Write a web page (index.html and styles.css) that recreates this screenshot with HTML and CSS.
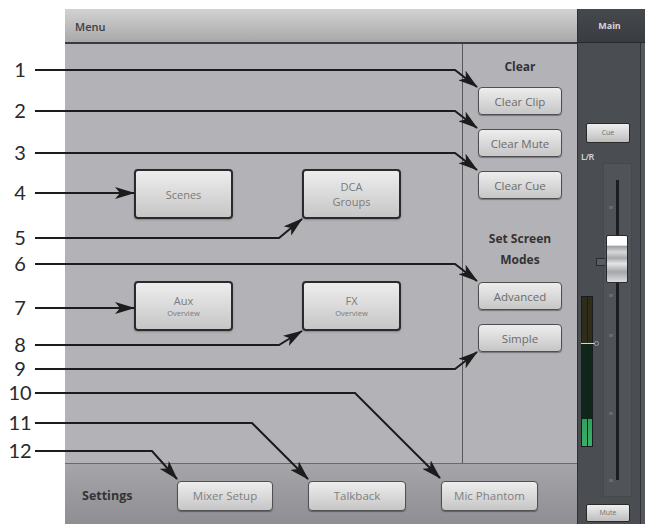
FILE: index.html
```html
<!DOCTYPE html>
<html>
<head>
<meta charset="utf-8">
<link rel="stylesheet" href="styles.css">
</head>
<body>
<div class="page">
  <div class="screen">
    <div class="main">
      <div class="topbar">Menu</div>
      <div class="content">
        <div class="tiles">
          <div class="btn big">Scenes</div>
          <div class="btn big"><span class="ln">DCA</span><span class="ln">Groups</span></div>
          <div class="btn big"><span class="ln">Aux</span><span class="sub">Overview</span></div>
          <div class="btn big"><span class="ln">FX</span><span class="sub">Overview</span></div>
        </div>
        <div class="side">
          <div class="side-title">Clear</div>
          <div class="btn sbtn first">Clear Clip</div>
          <div class="btn sbtn">Clear Mute</div>
          <div class="btn sbtn">Clear Cue</div>
          <div class="side-title two"><span class="ln">Set Screen</span><span class="ln">Modes</span></div>
          <div class="btn sbtn first2">Advanced</div>
          <div class="btn sbtn">Simple</div>
        </div>
      </div>
      <div class="bottombar">
        <div class="settings">Settings</div>
        <div class="btn bbtn w96">Mixer Setup</div>
        <div class="btn bbtn w98">Talkback</div>
        <div class="btn bbtn w97">Mic Phantom</div>
      </div>
    </div>
    <div class="strip">
      <div class="strip-head">Main</div>
      <div class="strip-body">
        <div class="mini cue">Cue</div>
        <div class="lr">L/R</div>
        <div class="fader-row">
          <div class="meter">
            <div class="ch"></div>
            <div class="ch"></div>
            <div class="zero"></div>
          </div>
          <div class="track">
            <div class="rail"></div>
            <div class="tick t1"></div>
            <div class="tick t2"></div>
            <div class="tick t3"></div>
            <div class="tick t4"></div>
            <div class="tick t5"></div>
            <div class="grip"></div>
            <div class="cap"></div>
          </div>
        </div>
        <div class="mini mute">Mute</div>
      </div>
    </div>
  </div>
  <svg class="annot" width="645" height="524" viewBox="0 0 645 524">
    <defs>
      <marker id="ah" viewBox="0 0 20 12" markerWidth="20" markerHeight="12" refX="19" refY="6" orient="auto" markerUnits="userSpaceOnUse">
        <path d="M0,0 L20,6 L0,12 L5,6 z" fill="#1c1c1c"/>
      </marker>
    </defs>
    <g class="lines" fill="none" stroke="#1c1c1c" stroke-width="2" marker-end="url(#ah)">
      <polyline points="35,70 455,70 477,87"/>
      <polyline points="35,111 455,111 477,128"/>
      <polyline points="35,153 455,153 477,170"/>
      <polyline points="35,193 134,193"/>
      <polyline points="35,238 279,238 302,219"/>
      <polyline points="35,264 455,264 477,281"/>
      <polyline points="35,308 134,308"/>
      <polyline points="35,345 279,345 302,331"/>
      <polyline points="35,369 455,369 477,352"/>
      <polyline points="35,393 355,393 440,478"/>
      <polyline points="35,423 252,423 308,479"/>
      <polyline points="35,451 152,451 177,479"/>
    </g>
    <g class="nums">
      <text x="20" y="77">1</text>
      <text x="20" y="118">2</text>
      <text x="20" y="160">3</text>
      <text x="20" y="200">4</text>
      <text x="20" y="245">5</text>
      <text x="20" y="271">6</text>
      <text x="20" y="315">7</text>
      <text x="20" y="352">8</text>
      <text x="20" y="376">9</text>
      <text x="20" y="400">10</text>
      <text x="20" y="430">11</text>
      <text x="20" y="458">12</text>
    </g>
  </svg>
</div>
</body>
</html>
```

FILE: styles.css
```css
html, body {
  margin: 0;
  padding: 0;
  background: #ffffff;
}

.page {
  position: relative;
  width: 645px;
  height: 524px;
  padding: 9px 0 0 65px;
  box-sizing: border-box;
  overflow: hidden;
  font-family: "Open Sans", "DejaVu Sans", sans-serif;
}

.screen {
  display: flex;
  height: 515px;
}

.main {
  width: 512px;
  display: flex;
  flex-direction: column;
  background: #b3b2b7;
}

.topbar {
  height: 33px;
  border-bottom: 2px solid #3a3a3c;
  background: linear-gradient(#d2d2d2, #b9b9b9 60%, #a8a8a8);
  font-size: 11px;
  font-weight: 600;
  color: #3e3e40;
  line-height: 36px;
  padding-left: 10px;
}

.content {
  height: 419px;
  display: flex;
}

.tiles {
  width: 397px;
  box-sizing: border-box;
  padding: 125px 0 0 69px;
  display: grid;
  grid-template-columns: 99px 99px;
  grid-auto-rows: 50px;
  column-gap: 69px;
  row-gap: 62px;
  align-content: start;
}

.btn {
  box-sizing: border-box;
  display: flex;
  flex-direction: column;
  align-items: center;
  justify-content: center;
  text-align: center;
  background: linear-gradient(#ededed, #dadada 50%, #c6c6c6);
  color: #7a7a7a;
  font-size: 11px;
  line-height: 15px;
  border-radius: 4px;
}

.ln {
  display: block;
}

.big {
  border: 2px solid #2a2a2a;
  box-shadow: 0 1px 2px rgba(0, 0, 0, 0.25);
}

.sub {
  display: block;
  font-size: 7.5px;
  line-height: 11px;
}

.side {
  width: 115px;
  box-sizing: border-box;
  border-left: 1px solid #58585c;
  display: flex;
  flex-direction: column;
  align-items: center;
  padding: 13px 0 0 0;
}

.side-title {
  font-size: 12px;
  font-weight: 700;
  color: #333335;
  line-height: 20px;
  text-align: center;
}

.side-title.two {
  line-height: 21px;
  margin-top: 29px;
}

.sbtn {
  width: 84px;
  height: 28px;
  margin-top: 14px;
  border: 1px solid #4f4f52;
  box-shadow: 0 1px 1px rgba(0, 0, 0, 0.35);
  color: #6c6c6c;
  font-size: 11.5px;
}

.sbtn.first {
  margin-top: 10px;
}

.sbtn.first2 {
  margin-top: 12px;
}

.bottombar {
  height: 61px;
  box-sizing: border-box;
  border-top: 1px solid #6a6a6e;
  background: linear-gradient(#a6a6aa, #9a9a9e 50%, #8f8f93);
  display: flex;
  align-items: center;
  padding: 3px 0 0 17px;
}

.settings {
  font-size: 12.5px;
  font-weight: 700;
  color: #333335;
  width: 95px;
}

.bbtn {
  height: 30px;
  margin-right: 35px;
  border: 1px solid #505053;
  box-shadow: 0 1px 1px rgba(0, 0, 0, 0.35);
  color: #808080;
  font-size: 11.5px;
}

.w96 { width: 96px; }
.w98 { width: 98px; }
.w97 { width: 97px; }

.strip {
  width: 68px;
  display: flex;
  flex-direction: column;
  border-left: 1px solid #2e3034;
  box-sizing: border-box;
  background: linear-gradient(to right, #4a4d52 0, #4a4d52 62px, #303236 62px, #303236 63px, #55585d 63px);
}

.strip-head {
  height: 33px;
  border-bottom: 1px solid #26282b;
  background: linear-gradient(#45484d, #393c41);
  color: #d6d6d8;
  font-size: 9px;
  font-weight: 700;
  line-height: 34px;
  text-align: center;
  padding-right: 4px;
}

.strip-body {
  display: flex;
  flex-direction: column;
  align-items: flex-start;
  padding-left: 3px;
}

.mini {
  box-sizing: border-box;
  width: 44px;
  margin-left: 5px;
  border-radius: 2px;
  background: linear-gradient(#eeeeee, #d6d6d6 50%, #bdbdbd);
  border: 1px solid #2a2a2a;
  color: #6f6f6f;
  font-size: 7px;
  text-align: center;
}

.cue {
  height: 20px;
  line-height: 18px;
  margin-top: 80px;
}

.lr {
  margin-top: 8px;
  height: 12px;
  font-size: 9px;
  font-weight: 600;
  line-height: 12px;
  color: #d9d9db;
  letter-spacing: -0.5px;
}

.fader-row {
  display: flex;
  align-items: flex-start;
}

.meter {
  position: relative;
  margin-top: 133px;
  width: 12px;
  height: 151px;
  box-sizing: border-box;
  border: 1px solid #1a1b1d;
  background: #1a1b1d;
  display: flex;
  gap: 1px;
}

.ch {
  flex: 1;
  background: linear-gradient(#2f2d1a 0, #2f2d1a 31%, #11261a 31%, #11261a 82%, #2f9f5d 82%, #3bb06a 100%);
}

.zero {
  position: absolute;
  left: -1px;
  top: 46px;
  width: 14px;
  height: 1px;
  background: #d8d8d8;
}

.zero::after {
  content: "";
  position: absolute;
  right: -4px;
  top: -2px;
  width: 3px;
  height: 3px;
  border: 1px solid #9a9a9a;
  border-radius: 50%;
}

.track {
  position: relative;
  margin-left: 10px;
  width: 29px;
  height: 334px;
  box-sizing: border-box;
  border: 1px solid #45484c;
  background: #505358;
}

.rail {
  position: absolute;
  left: 12px;
  top: 16px;
  width: 3px;
  height: 300px;
  background: #1d1e20;
}

.tick {
  position: absolute;
  left: 5px;
  width: 4px;
  height: 3px;
  background: #66696e;
}

.t1 { top: 42px; }
.t2 { top: 130px; }
.t3 { top: 170px; }
.t4 { top: 248px; }
.t5 { top: 315px; }

.grip {
  position: absolute;
  left: -8px;
  top: 94px;
  width: 8px;
  height: 6px;
  border: 1px solid #2a2b2e;
  border-right: none;
  background: #5a5d62;
}

.cap {
  position: absolute;
  left: 2px;
  top: 71px;
  width: 22px;
  height: 48px;
  box-sizing: border-box;
  border: 1px solid #2a2b2e;
  border-radius: 2px;
  background: linear-gradient(#ffffff 0, #ffffff 20%, #9c9ea1 22%, #d6d7d9 35%, #a8aaad 48%, #e4e5e6 60%, #a5a7aa 78%, #dadbdc 100%);
}

.mute {
  height: 18px;
  line-height: 16px;
  margin-top: 7px;
}

.annot {
  position: absolute;
  left: 0;
  top: 0;
  pointer-events: none;
}

.nums text {
  font-family: "Lato", "Open Sans", sans-serif;
  font-size: 20px;
  font-weight: 400;
  fill: #2a2a2a;
  text-anchor: middle;
}
```
